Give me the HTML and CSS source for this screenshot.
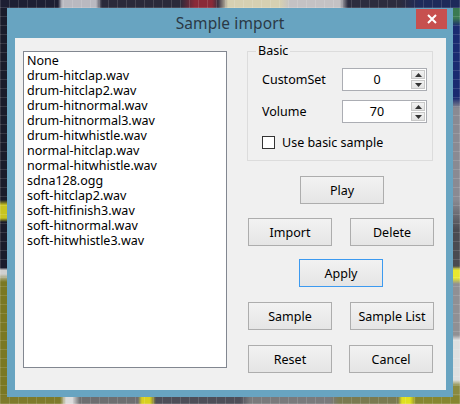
FILE: index.html
```html
<!DOCTYPE html>
<html>
<head>
<meta charset="utf-8">
<link rel="stylesheet" href="styles.css">
</head>
<body>
<div class="desk">
  <div class="window">
    <div class="titlebar">
      <span class="spacer"></span>
      <span class="title">Sample import</span>
      <div class="close">
        <svg width="10" height="10" viewBox="0 0 10 10"><path d="M1 1L9 9M9 1L1 9" stroke="#fff" stroke-width="2" fill="none"/></svg>
      </div>
    </div>
    <div class="client">
      <div class="listbox">
        <div class="item">None</div>
        <div class="item">drum-hitclap.wav</div>
        <div class="item">drum-hitclap2.wav</div>
        <div class="item">drum-hitnormal.wav</div>
        <div class="item">drum-hitnormal3.wav</div>
        <div class="item">drum-hitwhistle.wav</div>
        <div class="item">normal-hitclap.wav</div>
        <div class="item">normal-hitwhistle.wav</div>
        <div class="item">sdna128.ogg</div>
        <div class="item">soft-hitclap2.wav</div>
        <div class="item">soft-hitfinish3.wav</div>
        <div class="item">soft-hitnormal.wav</div>
        <div class="item">soft-hitwhistle3.wav</div>
      </div>
      <div class="side">
        <fieldset class="group">
          <legend>Basic</legend>
          <div class="row">
            <span class="lbl">CustomSet</span>
            <div class="spin">
              <span class="val">0</span>
              <div class="arrows">
                <span class="arr"><svg width="7" height="4" viewBox="0 0 7 4"><path d="M3.5 0L7 4H0Z" fill="#333"/></svg></span>
                <span class="arr"><svg width="7" height="4" viewBox="0 0 7 4"><path d="M0 0H7L3.5 4Z" fill="#333"/></svg></span>
              </div>
            </div>
          </div>
          <div class="row row2">
            <span class="lbl">Volume</span>
            <div class="spin">
              <span class="val">70</span>
              <div class="arrows">
                <span class="arr"><svg width="7" height="4" viewBox="0 0 7 4"><path d="M3.5 0L7 4H0Z" fill="#333"/></svg></span>
                <span class="arr"><svg width="7" height="4" viewBox="0 0 7 4"><path d="M0 0H7L3.5 4Z" fill="#333"/></svg></span>
              </div>
            </div>
          </div>
          <div class="check"><span class="box"></span><span class="ctext">Use basic sample</span></div>
        </fieldset>
        <div class="brow r-play"><button class="btn">Play</button></div>
        <div class="brow r-imp"><button class="btn">Import</button><button class="btn">Delete</button></div>
        <div class="brow r-apply"><button class="btn default">Apply</button></div>
        <div class="brow r-samp"><button class="btn">Sample</button><button class="btn">Sample List</button></div>
        <div class="brow r-reset"><button class="btn">Reset</button><button class="btn b-cancel">Cancel</button></div>
      </div>
    </div>
  </div>
</div>
</body>
</html>
```
FILE: styles.css
```css
html, body {
  margin: 0;
  padding: 0;
}
body {
  width: 460px;
  height: 404px;
  overflow: hidden;
  font-family: "Noto Sans", "Open Sans", sans-serif;
  background:
    repeating-linear-gradient(90deg, rgba(255,255,255,0.13) 0 1px, transparent 1px 9px),
    repeating-linear-gradient(0deg, rgba(255,255,255,0.13) 0 1px, transparent 1px 9px),
    linear-gradient(90deg, #1d1f33 0 58px, #b9b9c0 62px 96px, #2a2a3a 102px 180px, #8a2a38 195px 212px, #3a3040 218px, #d6d0b2 228px 280px, #c4c2c4 290px 340px, #2c2c3e 348px 400px, #1e2a5a 420px) top left / 460px 8px no-repeat,
    linear-gradient(90deg, #7d7a2a 0 60px, #dcdcdc 66px 72px, #6e6e70 80px 138px, #d8d020 142px 150px, #4e4e58 156px 240px, #7a7a7c 250px 330px, #7a7a50 340px 398px, #e0e020 402px 410px, #868630 416px) bottom left / 460px 8px no-repeat,
    linear-gradient(180deg, #1a1c2c 0 200px, #c8c420 205px 218px, #1a1c2c 222px 268px, #d0d0d0 270px 274px, #7a7824 282px) top left / 8px 404px no-repeat,
    linear-gradient(180deg, #3a7a50 0 18px, #1a2a70 26px 98px, #8a8a92 108px 200px, #4a4a50 230px 266px, #e8e830 270px 278px, #909094 284px 335px, #e0e0e0 340px 380px, #8a8a40 386px) top right / 8px 404px no-repeat,
    #1c1e30;
}
.desk {
  padding: 8px 0 0 7px;
}
.window {
  width: 446px;
  height: 389px;
  box-sizing: border-box;
  background: #68a4c1;
  padding: 0 7px 7px 8px;
  display: flex;
  flex-direction: column;
}
.titlebar {
  height: 30px;
  display: grid;
  grid-template-columns: 1fr auto 1fr;
  margin: 0 -7px 0 -8px;
}
.title {
  font-size: 15.5px;
  color: #2b3946;
  line-height: 30px;
  letter-spacing: 0.1px;
}
.close {
  justify-self: end;
  align-self: start;
  margin: 1px 6px 0 0;
  width: 31px;
  height: 20px;
  background: #c7504f;
  display: flex;
  align-items: center;
  justify-content: center;
}
.client {
  flex: 1;
  background: #f0f0f0;
  display: flex;
  align-items: flex-start;
  padding: 13px 0 0 8px;
  font-size: 12.5px;
  color: #000;
}
.listbox {
  width: 204px;
  height: 317px;
  box-sizing: border-box;
  border: 1px solid #828790;
  background: #fff;
  padding: 1px 0 0 3px;
}
.item {
  line-height: 15px;
  height: 15px;
  white-space: nowrap;
}
.side {
  margin-left: 20px;
  width: 187px;
  margin-top: -7px;
}
.group {
  margin: 0;
  border: 1px solid #dcdcdc;
  padding: 10px 4px 11px 14px;
  width: 186px;
  box-sizing: border-box;
}
.group legend {
  padding: 0 2px;
  margin-left: -6px;
  line-height: 14px;
}
.row {
  display: flex;
  align-items: center;
  height: 23px;
}
.row2 {
  margin-top: 9px;
}
.lbl {
  width: 80px;
}
.spin {
  width: 85px;
  height: 23px;
  box-sizing: border-box;
  border: 1px solid #abadb3;
  background: #fff;
  display: flex;
  align-items: stretch;
}
.val {
  flex: 1;
  text-align: center;
  line-height: 21px;
}
.arrows {
  width: 14px;
  margin: 1px 1px 1px 0;
  display: flex;
  flex-direction: column;
  gap: 1px;
}
.arr {
  flex: 1;
  background: linear-gradient(#f2f2f2, #e2e2e2);
  border: 1px solid #c8c8c8;
  display: flex;
  align-items: center;
  justify-content: center;
}
.check {
  display: flex;
  align-items: center;
  margin-top: 13px;
  height: 13px;
}
.box {
  width: 13px;
  height: 13px;
  box-sizing: border-box;
  border: 1px solid #333;
  background: #fff;
  margin-right: 7px;
}
.brow {
  display: flex;
}
.btn {
  width: 84px;
  height: 28px;
  box-sizing: border-box;
  border: 1px solid #adadad;
  background: linear-gradient(#f2f2f2, #e5e5e5);
  font-family: inherit;
  font-size: 12.5px;
  color: #000;
  padding: 0;
  margin: 0;
}
.btn.default {
  border-color: #3c9af0;
}
.r-play { margin-top: 15px; padding-left: 53px; }
.r-imp { margin-top: 14px; padding-left: 1px; gap: 18px; }
.r-apply { margin-top: 13px; padding-left: 52px; }
.r-samp { margin-top: 15px; padding-left: 1px; gap: 18px; }
.r-reset { margin-top: 15px; padding-left: 1px; gap: 17px; }
```
